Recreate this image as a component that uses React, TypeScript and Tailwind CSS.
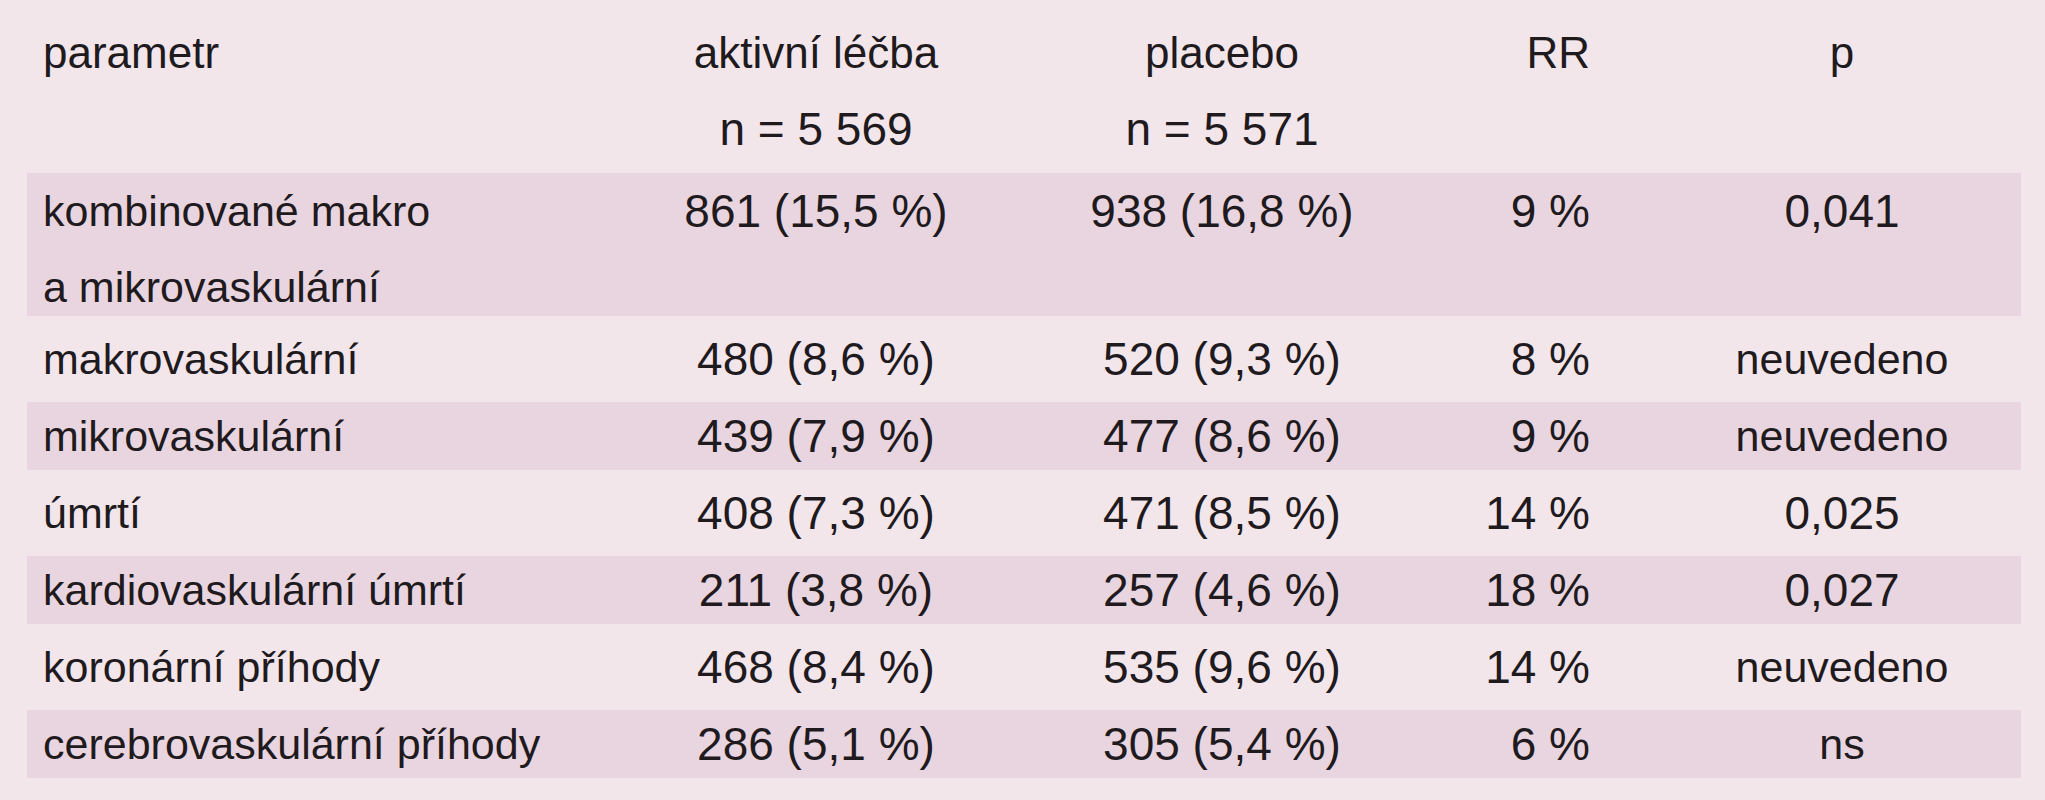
import React from "react"

type Row = {
  label: string[]
  active: string
  placebo: string
  rr: string
  p: string
}

const rows: Row[] = [
  {
    label: ["kombinované makro", "a mikrovaskulární"],
    active: "861 (15,5 %)",
    placebo: "938 (16,8 %)",
    rr: "9 %",
    p: "0,041",
  },
  { label: ["makrovaskulární"], active: "480 (8,6 %)", placebo: "520 (9,3 %)", rr: "8 %", p: "neuvedeno" },
  { label: ["mikrovaskulární"], active: "439 (7,9 %)", placebo: "477 (8,6 %)", rr: "9 %", p: "neuvedeno" },
  { label: ["úmrtí"], active: "408 (7,3 %)", placebo: "471 (8,5 %)", rr: "14 %", p: "0,025" },
  { label: ["kardiovaskulární úmrtí"], active: "211 (3,8 %)", placebo: "257 (4,6 %)", rr: "18 %", p: "0,027" },
  { label: ["koronární příhody"], active: "468 (8,4 %)", placebo: "535 (9,6 %)", rr: "14 %", p: "neuvedeno" },
  { label: ["cerebrovaskulární příhody"], active: "286 (5,1 %)", placebo: "305 (5,4 %)", rr: "6 %", p: "ns" },
]

const cols = "grid grid-cols-[573px_432px_380px_251px_358px]"

export default function App() {
  return (
    <div className="min-h-[800px] w-[2045px] bg-[#f2e6eb] pl-[27px] pt-[14px] font-['Liberation_Sans',Arial,sans-serif] text-[#1f1a1d]">
      {/* header */}
      <div className={`${cols} w-[1994px] leading-[77px]`}>
        <div className="pl-4 text-[44px]">parametr</div>
        <div className="flex flex-col items-center">
          <span className="text-[44px]">aktivní léčba</span>
          <span className="text-[46px]">n = 5 569</span>
        </div>
        <div className="flex flex-col items-center">
          <span className="text-[44px]">placebo</span>
          <span className="text-[46px]">n = 5 571</span>
        </div>
        <div className="pr-[73px] text-right text-[44px]">RR</div>
        <div className="text-center text-[44px]">p</div>
      </div>

      <div className="mt-[5px] flex w-[1994px] flex-col gap-[8.5px]">
        {rows.map((r, i) => {
          const band = i % 2 === 0 ? "bg-[#e8d5df]" : ""
          const tall = r.label.length > 1
          const word = r.p === "neuvedeno" || r.p === "ns"
          return (
            <div
              key={i}
              className={`${cols} ${band} ${tall ? "h-[143px] leading-[76px]" : "h-[68.5px] leading-[68.5px]"}`}
            >
              <div className="flex flex-col justify-center pl-4 text-[43px]">
                {r.label.map((l) => (
                  <span key={l}>{l}</span>
                ))}
              </div>
              <div className="flex flex-col justify-center">
                <span className="text-center text-[46px]">{r.active}</span>
                {tall && <span>&nbsp;</span>}
              </div>
              <div className="flex flex-col justify-center">
                <span className="text-center text-[46px]">{r.placebo}</span>
                {tall && <span>&nbsp;</span>}
              </div>
              <div className="flex flex-col justify-center pr-[73px]">
                <span className="text-right text-[46px]">{r.rr}</span>
                {tall && <span>&nbsp;</span>}
              </div>
              <div className="flex flex-col justify-center">
                <span className={`text-center ${word ? "text-[43px]" : "text-[46px]"}`}>{r.p}</span>
                {tall && <span>&nbsp;</span>}
              </div>
            </div>
          )
        })}
      </div>
    </div>
  )
}
